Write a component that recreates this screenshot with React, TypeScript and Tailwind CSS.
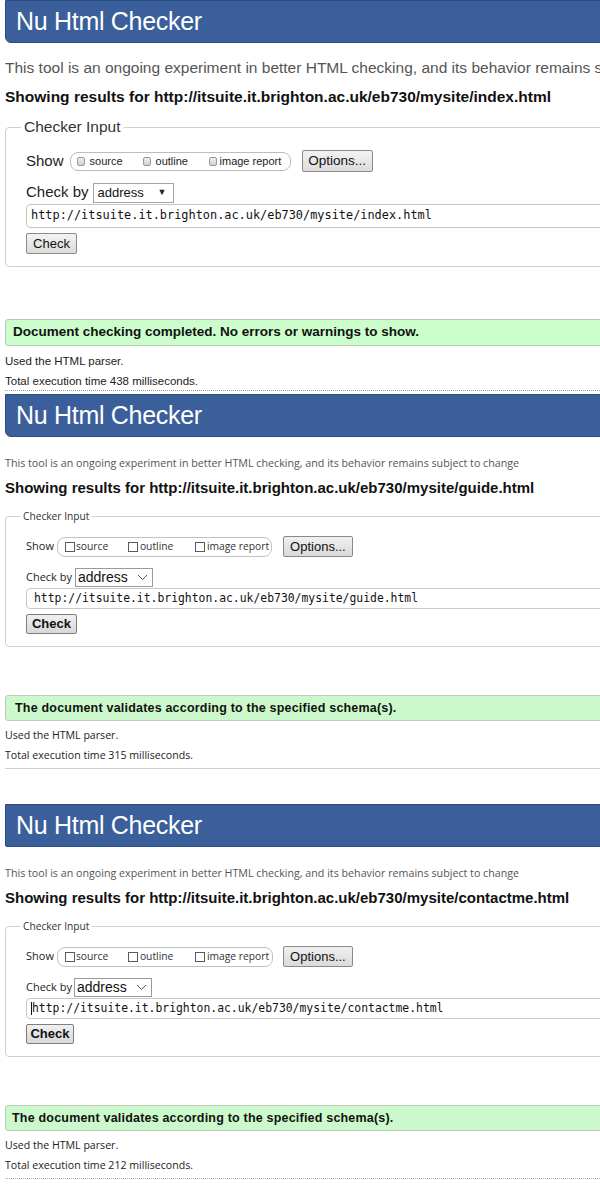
import React from "react";

const ARIAL = "font-[family-name:'Liberation_Sans',Arial,sans-serif]";
const SEGOE = "font-[family-name:'Open_Sans',sans-serif]";
const MONO = "font-[family-name:'DejaVu_Sans_Mono',monospace]";

function Header({ extra }: { extra: string }) {
  return (
    <div className={`h-[43px] ml-[5px] w-[620px] bg-[#3a5f9b] border border-[#2b4c80] flex items-center pl-[10px] ${extra}`}>
      <span className={`${ARIAL} text-white text-[25px] leading-none tracking-[-0.3px]`}>Nu Html Checker</span>
    </div>
  );
}

function Box7() {
  return <span className="inline-block w-[8px] h-[9px] border border-[#9a9a9a] rounded-[2px] bg-gradient-to-b from-[#f0f0f0] to-[#cfcfcf]" />;
}

function BoxFlat() {
  return <span className="inline-block w-[10px] h-[10px] border border-[#5a5a5a] bg-white" />;
}

function Section1() {
  return (
    <div>
      <Header extra="rounded-bl-[6px]" />
      <div className={`${ARIAL} mt-[15px] h-[20px] leading-[20px] pl-[5px] text-[15.5px] text-[#555] whitespace-nowrap`}>
        This tool is an ongoing experiment in better HTML checking, and its behavior remains subject to change
      </div>
      <div className={`${ARIAL} mt-[9px] h-[20px] leading-[20px] pl-[5px] text-[15.5px] font-bold text-[#111] whitespace-nowrap`}>
        Showing results for http://itsuite.it.brighton.ac.uk/eb730/mysite/index.html
      </div>
      <fieldset className="mt-[10px] ml-[5px] w-[640px] border border-[#cfcfcf] rounded-[4px] pl-[20px] pb-[12px]">
        <legend className={`${ARIAL} ml-[-5px] px-[3px] h-[20px] leading-[20px] text-[15.5px] text-[#333]`}>Checker Input</legend>
        <div className={`${ARIAL} mt-[13px] h-[22px] flex items-center`}>
          <span className="text-[15px] text-[#222]">Show</span>
          <div className="ml-[6px] h-[19px] w-[221px] border border-[#bdbdbd] rounded-[8px] flex items-center pl-[6px]">
            <span className="w-[66px] flex items-center gap-[5px]"><Box7 /><span className="text-[11px] text-[#222]">source</span></span>
            <span className="w-[66px] flex items-center gap-[5px]"><Box7 /><span className="text-[11px] text-[#222]">outline</span></span>
            <span className="flex items-center gap-[3px]"><Box7 /><span className="text-[11px] text-[#222]">image report</span></span>
          </div>
          <div className="ml-[11px] h-[22px] w-[71px] border border-[#8a8a8a] rounded-[2px] bg-gradient-to-b from-[#f3f3f3] to-[#dcdcdc] flex items-center justify-center text-[13.5px] text-[#111]">Options...</div>
        </div>
        <div className={`${ARIAL} mt-[10px] h-[21px] flex items-center`}>
          <span className="text-[15px] text-[#222]">Check by</span>
          <div className="ml-[4px] h-[20px] w-[81px] border border-[#a5a5a5] bg-white flex items-center pl-[4px] pr-[6px] justify-between">
            <span className="text-[13px] text-[#111]">address</span>
            <span className="text-[9px] text-[#222]">▼</span>
          </div>
        </div>
        <div className="mt-[1px] h-[24px] border border-[#c4c4c4] rounded-l-[4px] flex items-center pl-[4px]">
          <span className={`${MONO} text-[11.9px] text-[#111]`}>http://itsuite.it.brighton.ac.uk/eb730/mysite/index.html</span>
        </div>
        <div className={`${ARIAL} mt-[5px] h-[21px] w-[51px] border border-[#8a8a8a] rounded-[2px] bg-gradient-to-b from-[#f3f3f3] to-[#dcdcdc] flex items-center justify-center text-[13px] text-[#111]`}>Check</div>
      </fieldset>
      <div className="mt-[52px] ml-[5px] w-[620px] h-[27px] bg-[#ccfecc] border border-[#b9c9b9] rounded-l-[3px] flex items-center pl-[7px]">
        <span className={`${ARIAL} text-[13.5px] font-bold text-[#111]`}>Document checking completed. No errors or warnings to show.</span>
      </div>
      <div className={`${ARIAL} mt-[7px] h-[16px] leading-[16px] pl-[5px] text-[11.5px] text-[#222]`}>Used the HTML parser.</div>
      <div className={`${ARIAL} mt-[4px] h-[16px] leading-[16px] pl-[5px] text-[11.5px] text-[#222]`}>Total execution time 438 milliseconds.</div>
      <div className="mt-[1px] ml-[5px] border-b border-dotted border-[#999]" />
    </div>
  );
}

function SectionB({
  url,
  time,
  headerClass,
  top,
  showMl,
  pillW,
  optMl,
  selMl,
  checkW,
  inputPl,
  caret,
  greenPl,
  line,
}: {
  url: string;
  time: string;
  headerClass: string;
  top: string;
  showMl: string;
  pillW: string;
  optMl: string;
  selMl: string;
  checkW: string;
  inputPl: string;
  caret: boolean;
  greenPl: string;
  line: string;
}) {
  return (
    <div className={top}>
      <Header extra={headerClass} />
      <div className={`${SEGOE} mt-[18px] h-[16px] leading-[16px] pl-[5px] text-[10.7px] text-[#555] whitespace-nowrap`}>
        This tool is an ongoing experiment in better HTML checking, and its behavior remains subject to change
      </div>
      <div className={`${ARIAL} mt-[7px] h-[20px] leading-[20px] pl-[5px] text-[15px] font-bold text-[#111] whitespace-nowrap`}>
        Showing results for {url}
      </div>
      <fieldset className="mt-[11px] ml-[5px] w-[640px] border border-[#d0d0d0] rounded-[4px] pl-[20px] pb-[12px]">
        <legend className={`${SEGOE} ml-[-6px] px-[3px] h-[14px] leading-[14px] text-[10.2px] text-[#333]`}>Checker Input</legend>
        <div className={`mt-[13px] h-[21px] flex items-center`}>
          <span className={`${SEGOE} text-[11px] text-[#222]`}>Show</span>
          <div className={`${showMl} ${pillW} h-[20px] border border-[#c2c2c2] rounded-[8px] flex items-center pl-[7px]`}>
            <span className="w-[63px] flex items-center gap-[1px]"><BoxFlat /><span className={`${SEGOE} text-[10.3px] text-[#333]`}>source</span></span>
            <span className="w-[67px] flex items-center gap-[2px]"><BoxFlat /><span className={`${SEGOE} text-[10.3px] text-[#333]`}>outline</span></span>
            <span className="flex items-center gap-[2px]"><BoxFlat /><span className={`${SEGOE} text-[10.3px] text-[#333]`}>image report</span></span>
          </div>
          <div className={`${ARIAL} ${optMl} h-[21px] w-[70px] border border-[#8a8a8a] rounded-[2px] bg-gradient-to-b from-[#f0f0f0] to-[#dadada] flex items-center justify-center text-[13px] text-[#111]`}>Options...</div>
        </div>
        <div className="mt-[11px] h-[19px] flex items-center">
          <span className={`${SEGOE} text-[11px] text-[#222]`}>Check by</span>
          <div className={`${selMl} h-[19px] w-[78px] border border-[#9a9a9a] bg-white flex items-center pl-[2px] pr-[3px] justify-between`}>
            <span className={`${ARIAL} text-[14px] text-[#111]`}>address</span>
            <svg width="11" height="7" viewBox="0 0 11 7" className="mr-[1px]">
              <path d="M1 1 L5.5 5.5 L10 1" fill="none" stroke="#555" strokeWidth="1" />
            </svg>
          </div>
        </div>
        <div className={`mt-[1px] h-[21px] border border-[#c8c8c8] rounded-l-[4px] flex items-center ${inputPl}`}>
          {caret && <span className="inline-block w-[1px] h-[13px] bg-[#111]" />}
          <span className={`${MONO} text-[11.4px] text-[#111]`}>{url}</span>
        </div>
        <div className={`${ARIAL} mt-[5px] h-[20px] ${checkW} border border-[#7e7e7e] rounded-[2px] bg-gradient-to-b from-[#f0f0f0] to-[#d8d8d8] flex items-center justify-center text-[13px] font-bold text-[#111]`}>Check</div>
      </fieldset>
      <div className={`mt-[48px] ml-[5px] w-[620px] h-[26px] bg-[#ccf9cc] border border-[#c0cbc0] rounded-l-[3px] flex items-center ${greenPl}`}>
        <span className={`${ARIAL} text-[12.5px] font-bold text-[#111] tracking-[0.2px]`}>The document validates according to the specified schema(s).</span>
      </div>
      <div className={`${SEGOE} mt-[7px] h-[14px] leading-[14px] pl-[5px] text-[10.6px] text-[#222]`}>Used the HTML parser.</div>
      <div className={`${SEGOE} mt-[6px] h-[14px] leading-[14px] pl-[5px] text-[10.6px] text-[#222]`}>Total execution time {time} milliseconds.</div>
      <div className={`mt-[6px] ml-[5px] ${line}`} />
    </div>
  );
}

export default function App() {
  return (
    <div className="w-[600px] h-[1193px] overflow-hidden bg-white">
      <Section1 />
      <SectionB
        url="http://itsuite.it.brighton.ac.uk/eb730/mysite/guide.html"
        time="315"
        headerClass="rounded-bl-[6px]"
        top="mt-[3px]"
        showMl="ml-[3px]"
        pillW="w-[215px]"
        optMl="ml-[11px]"
        selMl="ml-[3px]"
        checkW="w-[51px]"
        inputPl="pl-[7px]"
        caret={false}
        greenPl="pl-[9px]"
        line="border-b border-[#d0d0d0]"
      />
      <SectionB
        url="http://itsuite.it.brighton.ac.uk/eb730/mysite/contactme.html"
        time="212"
        headerClass="rounded-bl-[2px]"
        top="mt-[35px]"
        showMl="ml-[3px]"
        pillW="w-[216px]"
        optMl="ml-[10px]"
        selMl="ml-[2px]"
        checkW="w-[48px]"
        inputPl="pl-[4px]"
        caret={true}
        greenPl="pl-[6px]"
        line="border-b border-dotted border-[#aaa]"
      />
    </div>
  );
}
